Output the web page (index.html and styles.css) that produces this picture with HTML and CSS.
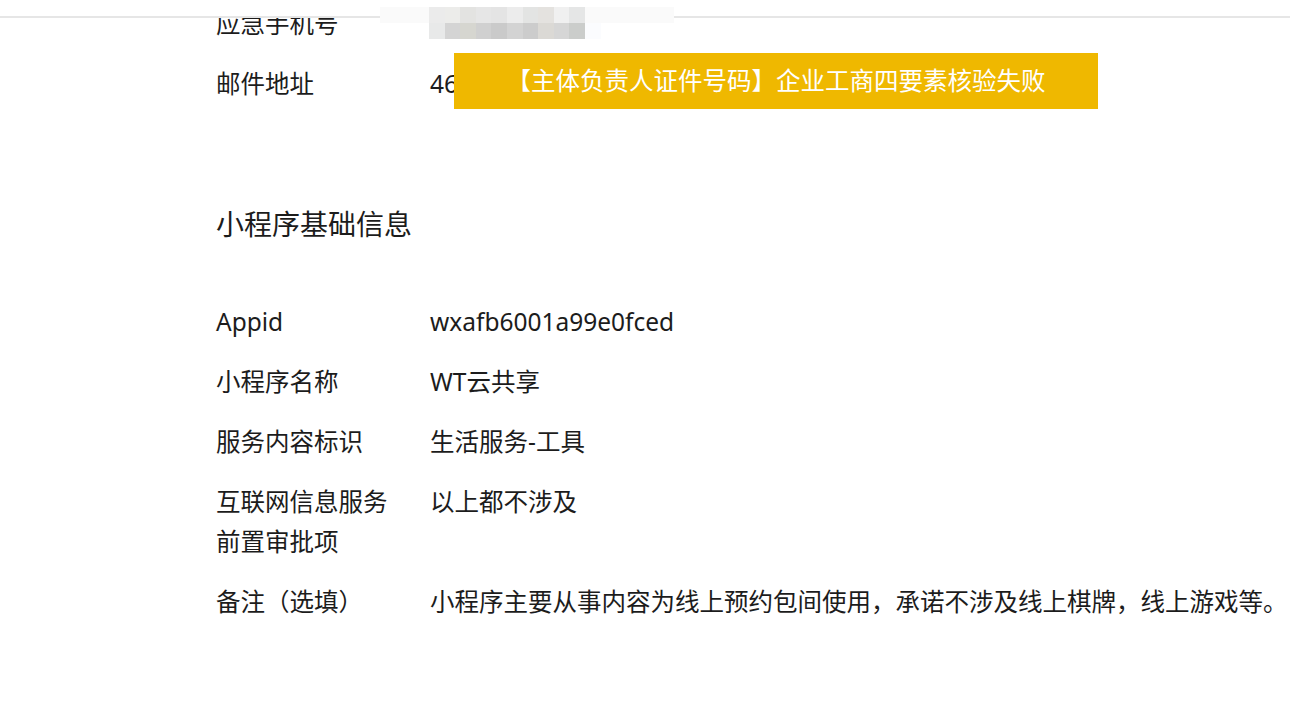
FILE: index.html
```html
<!DOCTYPE html>
<html>
  <head>
    <meta charset="utf-8">
    <title>小程序信息</title>
    <link rel="stylesheet" href="styles.css">
  </head>
  <body>
    <div class="topbar"></div>

    <div class="mosaic">
      <div class="mosaic-row">
        <span class="m" style="background:#ebebeb"></span>
        <span class="m" style="background:#ececea"></span>
        <span class="m" style="background:#e3e3e1"></span>
        <span class="m" style="background:#e6e6e6"></span>
        <span class="m" style="background:#e4e4e4"></span>
        <span class="m" style="background:#ececec"></span>
        <span class="m" style="background:#e3e4e3"></span>
        <span class="m" style="background:#e4e2df"></span>
        <span class="m" style="background:#f0f0f0"></span>
        <span class="m" style="background:#e5e6e6"></span>
      </div>
      <div class="mosaic-row">
        <span class="m" style="background:#e8e9e9"></span>
        <span class="m" style="background:#d4d4d4"></span>
        <span class="m" style="background:#d6d6d0"></span>
        <span class="m" style="background:#d0d0d0"></span>
        <span class="m" style="background:#cacaca"></span>
        <span class="m" style="background:#d3d3d3"></span>
        <span class="m" style="background:#cccccc"></span>
        <span class="m" style="background:#dbd9d5"></span>
        <span class="m" style="background:#d6d6d6"></span>
        <span class="m" style="background:#cbcdcb"></span>
        <span class="m" style="background:#fbfcfe"></span>
      </div>
    </div>

    <div class="toast">【主体负责人证件号码】企业工商四要素核验失败</div>

    <div class="page">
      <div class="section">
        <div class="row">
          <div class="label">应急手机号</div>
          <div class="value"></div>
        </div>
        <div class="row">
          <div class="label">邮件地址</div>
          <div class="value">4680219357@qq.com</div>
        </div>
      </div>

      <div class="section section-basic">
        <h3>小程序基础信息</h3>
        <div class="row">
          <div class="label">Appid</div>
          <div class="value">wxafb6001a99e0fced</div>
        </div>
        <div class="row">
          <div class="label">小程序名称</div>
          <div class="value">WT云共享</div>
        </div>
        <div class="row">
          <div class="label">服务内容标识</div>
          <div class="value">生活服务-工具</div>
        </div>
        <div class="row">
          <div class="label">互联网信息服务<br>前置审批项</div>
          <div class="value">以上都不涉及</div>
        </div>
        <div class="row">
          <div class="label">备注（选填）</div>
          <div class="value">小程序主要从事内容为线上预约包间使用，承诺不涉及线上棋牌，线上游戏等。</div>
        </div>
      </div>
    </div>
  </body>
</html>
```

FILE: styles.css
```css
html, body {
  margin: 0;
  padding: 0;
  background-color: #fff;
  overflow: hidden;
}

body {
  font-family: "Noto Sans", "Noto Sans CJK SC", sans-serif;
  color: #1c1c1c;
  font-size: 24.5px;
}

.topbar {
  position: fixed;
  top: 0;
  left: 0;
  right: 0;
  height: 16px;
  background-color: #fff;
  border-bottom: 2px solid #e6e6e6;
  z-index: 2;
}

.mosaic {
  position: absolute;
  top: 7px;
  left: 380px;
  width: 294px;
  height: 16px;
  padding-left: 49px;
  box-sizing: border-box;
  background-color: #fafafa;
  z-index: 3;
}

.mosaic-row {
  display: flex;
  height: 16px;
}

.m {
  width: 15.6px;
  height: 16px;
}

.toast {
  position: absolute;
  top: 53px;
  left: 454px;
  width: 644px;
  height: 56px;
  line-height: 56px;
  background-color: #efb800;
  color: #fff;
  text-align: center;
  z-index: 4;
}

.page {
  padding: 4px 0 0 216px;
}

.row {
  display: flex;
  line-height: 40px;
  margin-bottom: 20px;
}

.label {
  width: 214px;
  flex-shrink: 0;
}

.value {
  white-space: nowrap;
}

.section-basic {
  margin-top: 100px;
}

h3 {
  font-size: 28px;
  font-weight: normal;
  line-height: 40px;
  margin: 0 0 58px 0;
}
```
